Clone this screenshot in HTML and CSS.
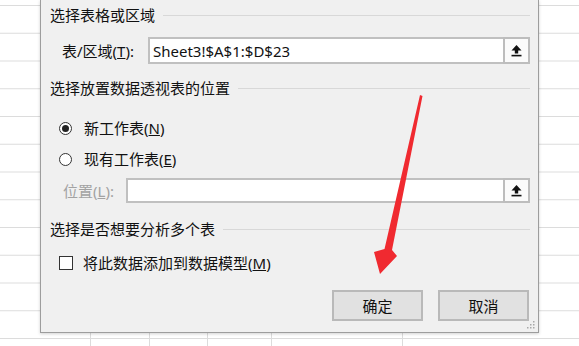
FILE: index.html
```html
<!DOCTYPE html>
<html lang="zh-CN">
<head>
    <meta charset="UTF-8">
    <title>创建数据透视表</title>
    <link rel="stylesheet" href="styles.css">
</head>
<body>
    <div class="sheet">
        <div class="dialog">
            <div class="group-title">选择表格或区域</div>

            <div class="field-row range-row">
                <label class="field-label">表/区域(<u>T</u>):</label>
                <div class="ref-input">Sheet3!$A$1:$D$23</div>
                <button class="ref-btn">
                    <svg width="13" height="13" viewBox="0 0 13 13">
                        <path d="M6.5 1 L1.5 6.5 H4.8 V9.5 H8.2 V6.5 H11.5 Z" fill="#111"/>
                        <rect x="1.5" y="10.8" width="10" height="1.6" fill="#111"/>
                    </svg>
                </button>
            </div>

            <div class="group-title">选择放置数据透视表的位置</div>

            <div class="option-row first-option">
                <span class="radio checked"></span>新工作表(<u>N</u>)
            </div>
            <div class="option-row second-option">
                <span class="radio"></span>现有工作表(<u>E</u>)
            </div>

            <div class="field-row loc-row">
                <label class="field-label muted">位置(<u>L</u>):</label>
                <div class="ref-input"></div>
                <button class="ref-btn">
                    <svg width="13" height="13" viewBox="0 0 13 13">
                        <path d="M6.5 1 L1.5 6.5 H4.8 V9.5 H8.2 V6.5 H11.5 Z" fill="#111"/>
                        <rect x="1.5" y="10.8" width="10" height="1.6" fill="#111"/>
                    </svg>
                </button>
            </div>

            <div class="group-title third-title">选择是否想要分析多个表</div>

            <div class="option-row check-row">
                <span class="checkbox"></span>将此数据添加到数据模型(<u>M</u>)
            </div>

            <div class="actions">
                <button class="btn">确定</button>
                <button class="btn">取消</button>
            </div>

            <svg class="grip" width="9" height="9" viewBox="0 0 9 9">
                <rect x="7" y="1" width="1.5" height="1.5" fill="#a8a8a8"/>
                <rect x="4" y="4" width="1.5" height="1.5" fill="#a8a8a8"/>
                <rect x="7" y="4" width="1.5" height="1.5" fill="#a8a8a8"/>
                <rect x="1" y="7" width="1.5" height="1.5" fill="#a8a8a8"/>
                <rect x="4" y="7" width="1.5" height="1.5" fill="#a8a8a8"/>
                <rect x="7" y="7" width="1.5" height="1.5" fill="#a8a8a8"/>
            </svg>
        </div>

        <!-- red annotation arrow pointing at the OK button -->
        <svg class="arrow" width="579" height="346" viewBox="0 0 579 346">
            <polygon points="420,95 422.5,96 392,250 397,256 380,274 374,252 384.5,249" fill="#f02a30"/>
        </svg>
    </div>
</body>
</html>
```

FILE: styles.css
```css
html, body {
    margin: 0;
    padding: 0;
}

body {
    font-family: "Noto Sans", "Noto Sans CJK SC", sans-serif;
    font-size: 15px;
    color: #111;
    width: 579px;
    height: 346px;
    overflow: hidden;
}

.sheet {
    position: relative;
    width: 579px;
    height: 346px;
    background-color: #fff;
    background-image:
        linear-gradient(to right,
            transparent 90px, #dcdcdc 90px 91px,
            transparent 91px 149px, #dcdcdc 149px 150px,
            transparent 150px 207px, #dcdcdc 207px 208px,
            transparent 208px 271px, #dcdcdc 271px 272px,
            transparent 272px 402px, #dcdcdc 402px 403px,
            transparent 403px),
        linear-gradient(to bottom, #dcdcdc 0 1px, transparent 1px);
    background-size: 100% 100%, 100% 27.75px;
    background-repeat: no-repeat, repeat;
    background-position: 0 0, 0 5px;
}

.dialog {
    position: relative;
    margin-left: 40px;
    width: 499px;
    height: 333px;
    box-sizing: border-box;
    background: #f0f0f0;
    border: 1px solid #9d9d9d;
    border-top: none;
    box-shadow: 0 1px 3px rgba(0, 0, 0, 0.18);
    padding: 5px 8px 0 9px;
    display: flex;
    flex-direction: column;
}

.group-title {
    display: flex;
    align-items: center;
    gap: 8px;
    height: 20px;
    line-height: 20px;
    white-space: nowrap;
}

.group-title::after {
    content: "";
    flex: 1;
    height: 1px;
    background: #d8d8d8;
}

.field-row {
    display: flex;
    align-items: stretch;
}

.range-row {
    margin-top: 12px;
    height: 27px;
    margin-bottom: 14px;
}

.loc-row {
    margin-top: 9px;
    height: 25px;
}

.field-label {
    box-sizing: border-box;
    width: 98px;
    padding-left: 12px;
    display: flex;
    align-items: center;
}

.loc-row .field-label {
    width: 76px;
    padding-left: 13px;
}

.muted {
    color: #a2a2a2;
}

.ref-input {
    flex: 1;
    box-sizing: border-box;
    background: #fff;
    border: 2px solid #c0c0c0;
    border-right: none;
    padding-left: 3px;
    display: flex;
    align-items: center;
    white-space: nowrap;
}

.ref-btn {
    width: 27px;
    box-sizing: border-box;
    margin: 0;
    padding: 0;
    background: #fbfbfb;
    border: 2px solid #bdbdbd;
    display: flex;
    align-items: center;
    justify-content: center;
}

.option-row {
    display: flex;
    align-items: center;
    height: 20px;
    line-height: 20px;
    padding-left: 9px;
    white-space: nowrap;
}

.first-option {
    margin-top: 20px;
}

.second-option {
    margin-top: 11px;
}

.radio {
    width: 13px;
    height: 13px;
    box-sizing: border-box;
    border: 1px solid #333;
    border-radius: 50%;
    background: #fff;
    margin-right: 12px;
    display: flex;
    align-items: center;
    justify-content: center;
}

.radio.checked::after {
    content: "";
    width: 7px;
    height: 7px;
    border-radius: 50%;
    background: #222;
}

.third-title {
    margin-top: 16px;
}

.check-row {
    margin-top: 14px;
}

.checkbox {
    width: 14px;
    height: 14px;
    box-sizing: border-box;
    border: 1px solid #333;
    background: #fff;
    margin-right: 10px;
}

.actions {
    margin-top: 17px;
    display: flex;
    justify-content: flex-end;
    gap: 15px;
    padding-right: 1px;
}

.btn {
    width: 91px;
    height: 31px;
    margin: 0;
    padding: 0;
    font-family: inherit;
    font-size: 15px;
    color: #111;
    background: #e1e1e1;
    border: 2px solid #b9b9b9;
}

.grip {
    position: absolute;
    right: 3px;
    bottom: 3px;
}

.arrow {
    position: absolute;
    left: 0;
    top: 0;
    pointer-events: none;
}
```
